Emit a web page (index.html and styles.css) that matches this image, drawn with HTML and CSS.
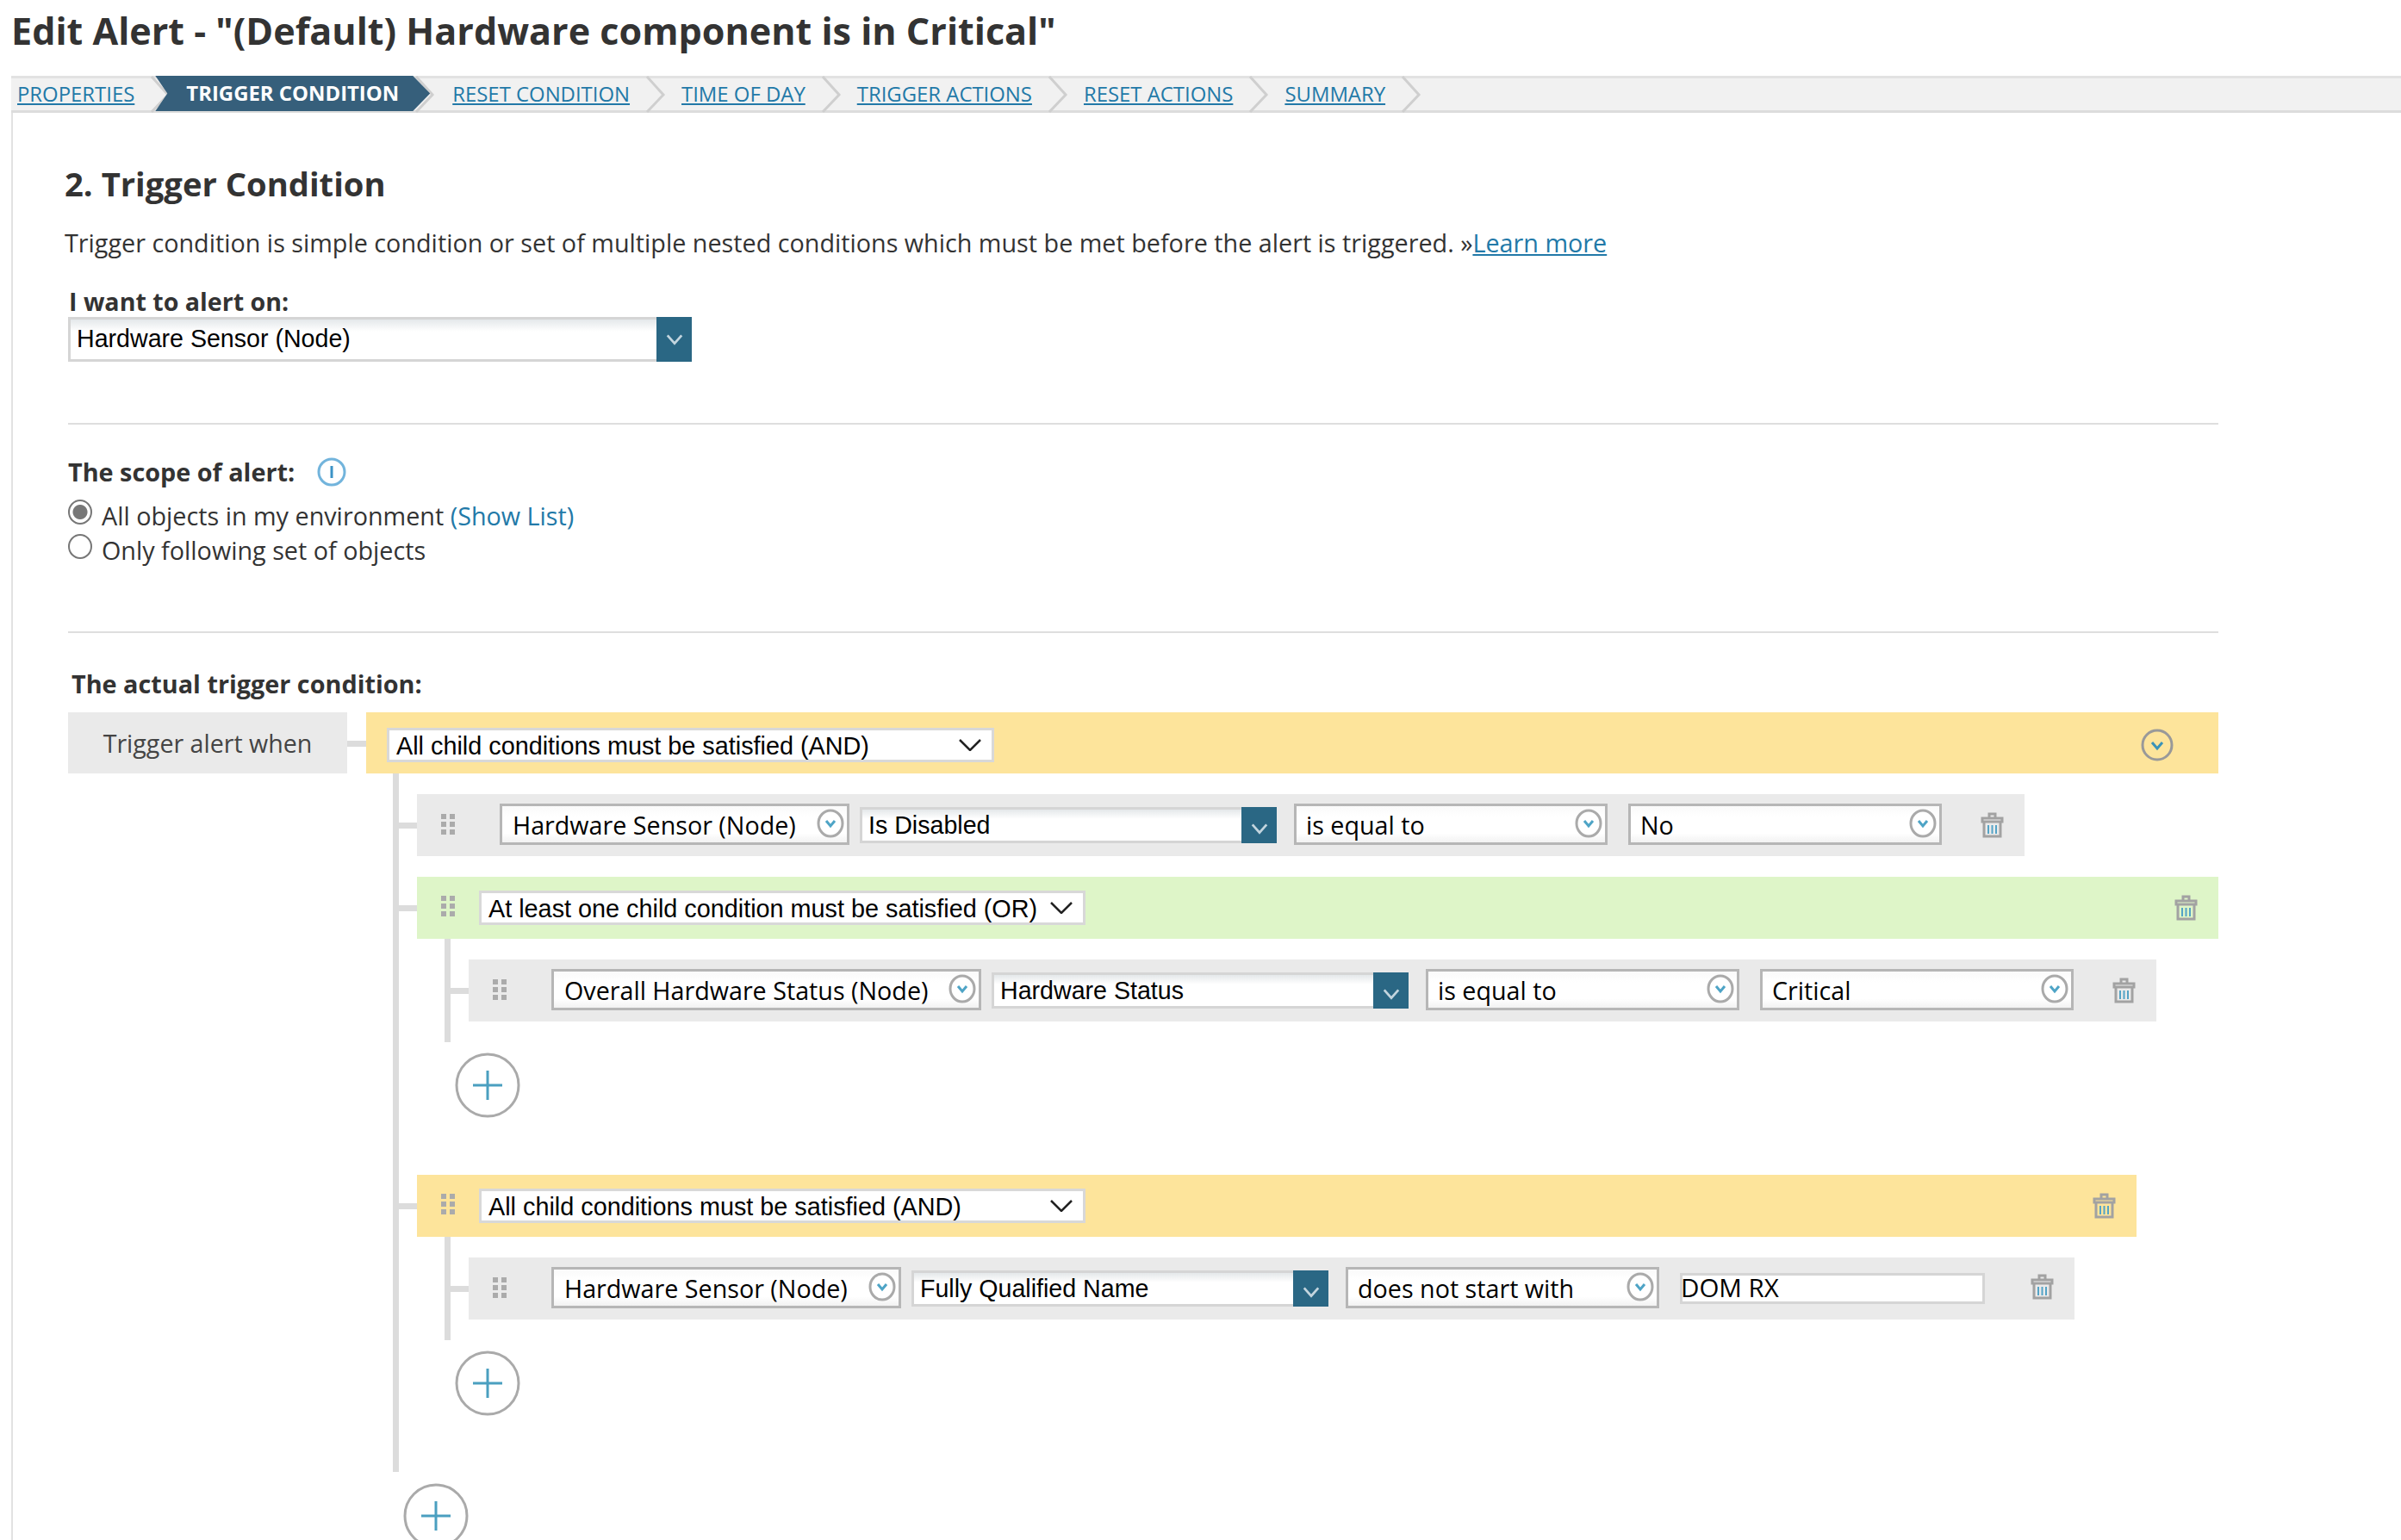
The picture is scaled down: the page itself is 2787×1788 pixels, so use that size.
FILE: index.html
```html
<!DOCTYPE html>
<html lang="en">
<head>
<meta charset="utf-8">
<title>Edit Alert</title>
<link rel="stylesheet" href="styles.css">
</head>
<body>
<h1 class="page-title">Edit Alert - "(Default) Hardware component is in Critical"</h1>
<nav class="crumbs">
  <a class="crumb first" href="#">PROPERTIES</a>
  <svg class="chev" viewBox="0 0 24 43"><path d="M2 1 L21 22 L2 42"/></svg>
  <span class="crumb active">TRIGGER CONDITION</span>
  <svg class="chev after-active" viewBox="0 0 24 43"><path d="M2 1 L21 22 L2 42"/></svg>
  <a class="crumb" href="#">RESET CONDITION</a>
  <svg class="chev" viewBox="0 0 24 43"><path d="M2 1 L21 22 L2 42"/></svg>
  <a class="crumb" href="#">TIME OF DAY</a>
  <svg class="chev" viewBox="0 0 24 43"><path d="M2 1 L21 22 L2 42"/></svg>
  <a class="crumb" href="#">TRIGGER ACTIONS</a>
  <svg class="chev" viewBox="0 0 24 43"><path d="M2 1 L21 22 L2 42"/></svg>
  <a class="crumb" href="#">RESET ACTIONS</a>
  <svg class="chev" viewBox="0 0 24 43"><path d="M2 1 L21 22 L2 42"/></svg>
  <a class="crumb" href="#">SUMMARY</a>
  <svg class="chev" viewBox="0 0 24 43"><path d="M2 1 L21 22 L2 42"/></svg>
</nav>
<main class="content">
  <h2 class="step-title">2. Trigger Condition</h2>
  <p class="intro">Trigger condition is simple condition or set of multiple nested conditions which must be met before the alert is triggered. »<a href="#">Learn more</a></p>
  <div class="label first-label">I want to alert on:</div>
  <div class="combo big"><span class="combo-text">Hardware Sensor (Node)</span><span class="combo-btn"><svg viewBox="0 0 24 14"><path d="M3 2 L12 12 L21 2"/></svg></span></div>
  <hr class="rule one">
  <div class="label scope-label">The scope of alert:<svg class="info" viewBox="0 0 34 34"><circle cx="17" cy="17" r="15"/><path d="M17 10 V24"/></svg></div>
  <div class="radio-line on"><span class="radio"></span><span class="radio-text">All objects in my environment <a href="#" class="plain">(Show List)</a></span></div>
  <div class="radio-line off"><span class="radio"></span><span class="radio-text">Only following set of objects</span></div>
  <hr class="rule two">
  <div class="label actual-label">The actual trigger condition:</div>

  <div class="root-line">
    <div class="when">Trigger alert when</div>
    <div class="root-link"></div>
    <div class="bar yellow root-bar">
      <div class="logic root-logic"><span>All child conditions must be satisfied (AND)</span><svg viewBox="0 0 26 14"><path d="M1 1 L13 13 L25 1"/></svg></div>
      <svg class="collapse" viewBox="0 0 38 38"><circle cx="19" cy="19" r="17"/><path d="M13 16 L19 23 L25 16"/></svg>
    </div>
  </div>

  <div class="children tree">
    <div class="node row">
      <div class="dots"><i></i><i></i><i></i><i></i><i></i><i></i></div>
      <div class="field w406"><span>Hardware Sensor (Node)</span><svg class="circ" viewBox="0 0 32 34"><ellipse cx="16" cy="17" rx="14" ry="15"/><path d="M11 14 L16 20 L21 14"/></svg></div>
      <div class="combo"><span class="combo-text">Is Disabled</span><span class="combo-btn"><svg viewBox="0 0 24 14"><path d="M3 2 L12 12 L21 2"/></svg></span></div>
      <div class="field w364 g20"><span>is equal to</span><svg class="circ" viewBox="0 0 32 34"><ellipse cx="16" cy="17" rx="14" ry="15"/><path d="M11 14 L16 20 L21 14"/></svg></div>
      <div class="field w364 g24"><span>No</span><svg class="circ" viewBox="0 0 32 34"><ellipse cx="16" cy="17" rx="14" ry="15"/><path d="M11 14 L16 20 L21 14"/></svg></div>
      <svg class="trash" viewBox="0 0 27 30"><path class="t" d="M10 6 V2 H17 V6 M2 7 H25 V11 H2 Z M4 11 V28 H23 V11"/><path class="b" d="M9 15 V25 M13.500 15 V25 M18 15 V25"/></svg>
    </div>

    <div class="node group-head">
      <div class="bar green">
        <div class="dots"><i></i><i></i><i></i><i></i><i></i><i></i></div>
        <div class="logic sub-logic"><span>At least one child condition must be satisfied (OR)</span><svg viewBox="0 0 26 14"><path d="M1 1 L13 13 L25 1"/></svg></div>
        <svg class="trash end" viewBox="0 0 27 30"><path class="t" d="M10 6 V2 H17 V6 M2 7 H25 V11 H2 Z M4 11 V28 H23 V11"/><path class="b" d="M9 15 V25 M13.500 15 V25 M18 15 V25"/></svg>
      </div>
      <div class="children nested">
        <div class="node row">
          <div class="dots"><i></i><i></i><i></i><i></i><i></i><i></i></div>
          <div class="field w499"><span>Overall Hardware Status (Node)</span><svg class="circ" viewBox="0 0 32 34"><ellipse cx="16" cy="17" rx="14" ry="15"/><path d="M11 14 L16 20 L21 14"/></svg></div>
          <div class="combo"><span class="combo-text">Hardware Status</span><span class="combo-btn"><svg viewBox="0 0 24 14"><path d="M3 2 L12 12 L21 2"/></svg></span></div>
          <div class="field w364 g20"><span>is equal to</span><svg class="circ" viewBox="0 0 32 34"><ellipse cx="16" cy="17" rx="14" ry="15"/><path d="M11 14 L16 20 L21 14"/></svg></div>
          <div class="field w364 g24"><span>Critical</span><svg class="circ" viewBox="0 0 32 34"><ellipse cx="16" cy="17" rx="14" ry="15"/><path d="M11 14 L16 20 L21 14"/></svg></div>
          <svg class="trash" viewBox="0 0 27 30"><path class="t" d="M10 6 V2 H17 V6 M2 7 H25 V11 H2 Z M4 11 V28 H23 V11"/><path class="b" d="M9 15 V25 M13.500 15 V25 M18 15 V25"/></svg>
        </div>
      </div>
      <svg class="add inner" viewBox="0 0 76 76"><circle cx="38" cy="38" r="36"/><path d="M38 21 V55 M21 38 H55"/></svg>
    </div>

    <div class="node group-head second">
      <div class="bar yellow short">
        <div class="dots"><i></i><i></i><i></i><i></i><i></i><i></i></div>
        <div class="logic sub-logic"><span>All child conditions must be satisfied (AND)</span><svg viewBox="0 0 26 14"><path d="M1 1 L13 13 L25 1"/></svg></div>
        <svg class="trash end" viewBox="0 0 27 30"><path class="t" d="M10 6 V2 H17 V6 M2 7 H25 V11 H2 Z M4 11 V28 H23 V11"/><path class="b" d="M9 15 V25 M13.500 15 V25 M18 15 V25"/></svg>
      </div>
      <div class="children nested">
        <div class="node row">
          <div class="dots"><i></i><i></i><i></i><i></i><i></i><i></i></div>
          <div class="field w406"><span>Hardware Sensor (Node)</span><svg class="circ" viewBox="0 0 32 34"><ellipse cx="16" cy="17" rx="14" ry="15"/><path d="M11 14 L16 20 L21 14"/></svg></div>
          <div class="combo"><span class="combo-text">Fully Qualified Name</span><span class="combo-btn"><svg viewBox="0 0 24 14"><path d="M3 2 L12 12 L21 2"/></svg></span></div>
          <div class="field w364 g20"><span>does not start with</span><svg class="circ" viewBox="0 0 32 34"><ellipse cx="16" cy="17" rx="14" ry="15"/><path d="M11 14 L16 20 L21 14"/></svg></div>
          <div class="text-input">DOM RX</div>
          <svg class="trash wide" viewBox="0 0 27 30"><path class="t" d="M10 6 V2 H17 V6 M2 7 H25 V11 H2 Z M4 11 V28 H23 V11"/><path class="b" d="M9 15 V25 M13.500 15 V25 M18 15 V25"/></svg>
        </div>
      </div>
      <svg class="add inner" viewBox="0 0 76 76"><circle cx="38" cy="38" r="36"/><path d="M38 21 V55 M21 38 H55"/></svg>
    </div>
  </div>
  <svg class="add outer" viewBox="0 0 76 76"><circle cx="38" cy="38" r="36"/><path d="M38 21 V55 M21 38 H55"/></svg>
</main>
</body>
</html>
```
FILE: styles.css
```css
* { box-sizing: border-box; }
html, body { margin: 0; height: 1788px; overflow: hidden; background: #fff; }
body { font-family: "Open Sans", sans-serif; color: #333; }

.page-title { margin: 0; height: 88px; padding-left: 13px; font-size: 43.100px; line-height: 72px; font-weight: 700; color: #333; }

.crumbs { margin-left: 13px; height: 43px; display: flex; align-items: center; background: #f1f1f1; border-top: 3px solid #e2e2e2; border-bottom: 3px solid #dcdcdc; }
.crumb { font-size: 23.900px; line-height: 35px; margin-top: -3px; color: #2279a8; text-decoration: underline; padding: 0 18px; white-space: nowrap; }
.crumb.first { padding: 0 18px 0 7px; }
.chev { width: 24px; height: 43px; flex: none; margin: -3px 0; }
.chev path { fill: none; stroke: #cfcfcf; stroke-width: 3; }
.crumb.active { position: relative; z-index: 1; height: 41px; margin: -3px 0 -1px -18px; padding: 0 36px; line-height: 39px; background: #365f7b; color: #fff; font-weight: 700; text-decoration: none; clip-path: polygon(0 0, calc(100% - 20px) 0, 100% 50%, calc(100% - 20px) 100%, 0 100%, 14px 50%); }
.chev.after-active { margin: -3px 2px -3px -18px; }

.content { margin-left: 13px; height: 1657px; border-left: 2px solid #e2e2e2; padding-left: 64px; }

.step-title { margin: 0 0 0 -4px; padding-top: 53.500px; font-size: 38.200px; line-height: 56px; font-weight: 700; color: #333; }
.intro { margin: 20px 0 0 -4px; font-size: 28.760px; line-height: 42px; color: #333; }
.intro a { color: #2279a8; }
.label { font-size: 28.600px; line-height: 40px; font-weight: 700; color: #333; }
.first-label { margin-top: 29.500px; margin-left: 1px; height: 36px; line-height: 36px; }
.scope-label { margin-top: 35px; display: flex; align-items: center; font-size: 28.800px; }
.actual-label { margin-top: 39px; margin-left: 4px; font-size: 28.800px; }
.info { width: 34px; height: 34px; margin-left: 26px; }
.info circle { fill: none; stroke: #72b4dc; stroke-width: 3; }
.info path { stroke: #3b92c6; stroke-width: 3; }

.rule { border: 0; margin: 0; width: 2496px; height: 2px; background: #dedede; }
.rule.one { margin-top: 71px; }
.rule.two { margin-top: 78.500px; }

.radio-line { display: flex; height: 40px; font-size: 28.750px; line-height: 40px; }
.radio-line.on { margin-top: 6.500px; }
.radio { width: 28px; height: 29px; border-radius: 50%; background: #fff; border: 2px solid #777; margin-top: 5px; flex: none; }
.on .radio { background: radial-gradient(circle, #777 0 8px, #fff 9px); }
.radio-text { margin-left: 11px; margin-top: 4px; }
.plain { color: #2279a8; text-decoration: none; }

.root-line { display: flex; width: 2496px; height: 71px; margin-top: 13px; }
.when { width: 324px; background: #eaeaea; font-size: 28.600px; line-height: 71px; text-align: center; color: #444; }
.root-link { width: 22px; height: 7px; margin-top: 33px; background: #dcdcdc; }
.bar { display: flex; align-items: center; height: 72px; }
.root-bar { flex: 1; height: 71px; padding: 5px 0 0 24px; justify-content: space-between; }
.yellow { background: #fde49b; }
.green { background: #def5c8; }

.logic { display: flex; align-items: center; justify-content: space-between; background: #fff; border: 3px solid #d8d8d8; font-family: "Liberation Sans", Arial, sans-serif; font-size: 28.800px; color: #000; padding: 0 12px 0 8px; white-space: nowrap; }
.logic span { margin-top: 3px; }
.logic svg { width: 26px; height: 14px; }
.logic path { fill: none; stroke: #222; stroke-width: 2.500; }
.root-logic { width: 705px; height: 40px; }
.sub-logic { width: 704px; height: 40px; margin-left: 28px; }
.collapse { width: 38px; height: 38px; margin-right: 52px; }
.collapse circle { fill: none; stroke: #999; stroke-width: 3; }
.collapse path { fill: none; stroke: #3a93b8; stroke-width: 3; }

.children { position: relative; }
.tree { margin-left: 377px; width: 2119px; height: 811px; border-left: 7px solid #dcdcdc; padding: 24px 0 0 21px; }
.nested { margin-left: 32px; height: 120px; border-left: 7px solid #dcdcdc; padding: 24px 0 0 21px; }

.node { position: relative; }
.node::before { content: ""; position: absolute; left: -21px; top: 33px; width: 21px; height: 7px; background: #dcdcdc; }
.group-head { margin-top: 24px; }
.group-head.second { margin-top: 66px; }
.short { width: 1996px; }

.row { display: flex; align-items: flex-start; width: fit-content; height: 72px; background: #eaeaea; padding-right: 24px; }
.dots { display: grid; grid-template-columns: 6px 6px; column-gap: 4px; row-gap: 3px; width: 16px; margin-left: 28px; flex: none; }
.dots i { display: block; width: 6px; height: 6px; background: #ababab; }
.row .dots { margin-top: 23px; margin-right: 52px; }
.green .dots, .yellow .dots { margin-top: -4px; }

.field { display: flex; align-items: center; justify-content: space-between; height: 48px; margin-top: 11px; padding: 0 3px 0 12px; flex: none; background: linear-gradient(#fafafa, #fff 30%, #fff 75%, #f2f2f2); border: 3px solid #b6b6b6; font-size: 28.700px; color: #000; white-space: nowrap; }
.circ { width: 32px; height: 34px; flex: none; margin-top: -3px; }
.circ ellipse { fill: #fff; stroke: #aaa; stroke-width: 3; }
.circ path { fill: none; stroke: #4ea4c6; stroke-width: 3; }
.w406 { width: 406px; }
.w499 { width: 499px; }
.w364 { width: 364px; }
.g20 { margin-left: 20px; padding-left: 11px; }
.g24 { margin-left: 24px; padding-left: 11px; }

.combo { display: flex; justify-content: space-between; width: 484px; height: 42px; margin: 15px 0 0 12px; flex: none; background: linear-gradient(#e4e8ea, #fff 30%); border: 3px solid #d5d5d5; border-right: 0; font-family: "Liberation Sans", Arial, sans-serif; font-size: 28.600px; color: #000; white-space: nowrap; }
.combo-text { padding-left: 7px; line-height: 37px; }
.combo-btn { width: 41px; margin: -3px 0; display: flex; align-items: center; justify-content: center; background: #2a6784; flex: none; }
.combo-btn svg { width: 22px; height: 14px; margin-top: 8px; }
.combo-btn path { fill: none; stroke: #c3d5de; stroke-width: 3; }
.combo.big { width: 724px; height: 52px; margin: 0; }
.big .combo-text { line-height: 45px; padding-left: 7px; }
.big .combo-btn svg { margin-top: 0; }

.text-input { width: 354px; height: 36px; margin: 18px 0 0 24px; flex: none; background: #fff; border: 3px solid #d5d5d5; font-size: 29.500px; line-height: 28px; text-indent: -2px; color: #000; white-space: nowrap; }

.trash { width: 27px; height: 30px; flex: none; margin: 21px 0 0 45px; }
.trash.wide { margin-left: 53px; margin-top: 19px; }
.trash.end { margin: 0 24px 0 auto; }
.trash .t { fill: none; stroke: #a2a2a2; stroke-width: 3; }
.trash .b { fill: none; stroke: #54a3c6; stroke-width: 2; }

.add { display: block; width: 76px; height: 76px; }
.add circle { fill: #fff; stroke: #aaa; stroke-width: 3; }
.add path { fill: none; stroke: #4a9fc0; stroke-width: 3; }
.add.inner { margin: 12px 0 0 44px; }
.add.outer { margin: 13px 0 0 389px; }
```
